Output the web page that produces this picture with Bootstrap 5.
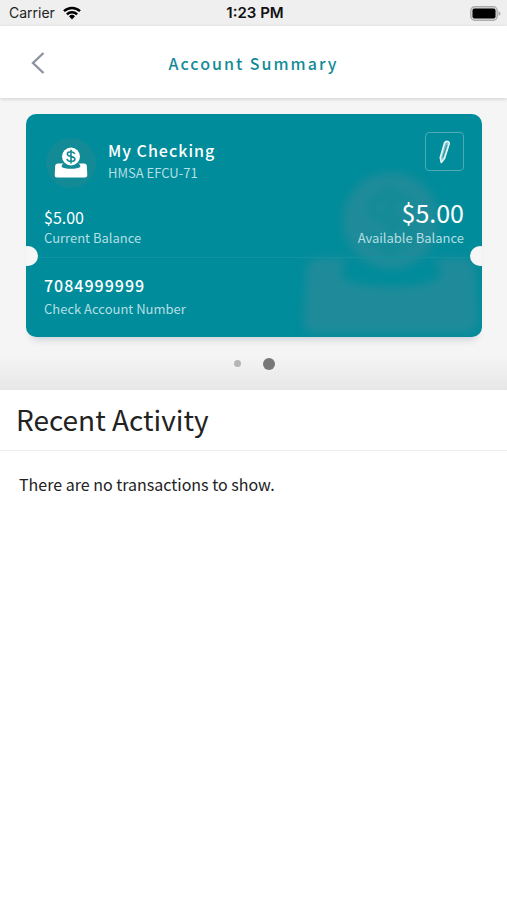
<!DOCTYPE html>
<html lang="en">
<head>
<meta charset="utf-8">
<meta name="viewport" content="width=device-width, initial-scale=1">
<title>Account Summary</title>
<link href="https://cdn.jsdelivr.net/npm/bootstrap@5.3.0/dist/css/bootstrap.min.css" rel="stylesheet">
<style>
  body { font-family: "Noto Sans CJK SC", "Noto Sans", sans-serif; color: #222; background: #fff; }
  .status-bar { font-family: Inter, "Liberation Sans", sans-serif; font-size: 14px; line-height: 26px; padding: 0 6px 0 9px; background: #efefef; color: #222; }
  .status-bar .clock { font-size: 15px; font-weight: 600; color: #111; }
  .title-bar { height: 72px; padding: 2px 24px 0; background: #fff; box-shadow: 0 1px 4px rgba(0,0,0,.16); z-index: 1; }
  .title-bar h1 { font-size: 16px; line-height: 24px; font-weight: 500; letter-spacing: 2px; color: #138b97; }
  .back-btn, .back-space { width: 28px; height: 40px; }
  .summary { padding: 16px 25px 0 26px; background: linear-gradient(#f5f5f5 0, #f5f5f5 256px, #e7e7e7 100%); }
  .account { background: #008c9b; color: #fff; border-radius: 10px; }
  .account-shadow { border-radius: 10px; box-shadow: 0 8px 8px -6px rgba(0,40,80,.2); }
  .account-top { padding: 18px 18px 8px; }
  .account-bottom { padding: 15px 18px 17px; }
  .emblem { width: 50px; height: 50px; border-radius: 50%; background: #128b97; color: #fff; margin: 6px 0 0 2px; }
  .heading { padding: 6px 0 0 12px; }
  .balances { padding-top: 9px; }
  .watermark { right: 0; bottom: -4px; color: #1f8b9a; filter: blur(5px); }
  .name { font-size: 16px; line-height: 24px; font-weight: 500; letter-spacing: 1px; }
  .caption { font-size: 13px; line-height: 22px; color: #b4dfe3; }
  .amount { font-size: 16px; line-height: 20px; }
  .amount-lg { font-size: 25px; line-height: 30px; }
  .number { font-size: 16px; line-height: 25px; font-weight: 500; letter-spacing: 1px; }
  .edit-btn { width: 39px; height: 39px; border: 1px solid #4eabb5; border-radius: 4px; }
  .tear { height: 1px; background: #1093a1; }
  .notch { width: 20px; height: 20px; top: -11px; border-radius: 50%; background: #f6f6f6; }
  .notch-left { left: -8px; }
  .notch-right { right: -8px; }
  .pager { height: 53px; gap: 22px; }
  .pager-dot { width: 7px; height: 7px; border-radius: 50%; background: #b5b5b5; }
  .pager-dot.active { width: 12px; height: 12px; background: #777; }
  .activity h2 { font-size: 28px; line-height: 40px; font-weight: 400; padding: 9px 16px 11px; border-bottom: 1px solid #eee; }
  .activity p { font-size: 16px; line-height: 24px; padding: 21px 19px; }
</style>
<script src="https://cdn.jsdelivr.net/npm/bootstrap@5.3.0/dist/js/bootstrap.bundle.min.js"></script>
</head>
<body>
<svg width="0" height="0" class="position-absolute" aria-hidden="true">
  <symbol id="coin-slot" viewBox="0 0 34 32">
    <path fill="currentColor" d="M4 16.500h5.500C7.500 18 7 19.500 8.500 20.500c4 1.800 13 1.800 17 0 1.500-1 1-2.500-1-4H30q2.500 0 2.800 2l.5 9.500q0 2.500-2.300 2.500H3Q.7 30.500.7 28l.5-9.500q.3-2 2.800-2z"/>
    <circle cx="17" cy="9.500" r="9" fill="currentColor"/>
    <path fill="none" stroke="#128b97" stroke-width="1.600" d="M20.800 6.800C20 5.200 18.700 4.700 17 4.700c-2.200 0-3.700.8-3.700 2.300 0 3.400 7.600 1.500 7.600 5 0 1.600-1.600 2.500-3.900 2.500-2 0-3.500-.8-4.100-2.500M17 2.800v13.600"/>
  </symbol>
</svg>

<div class="status-bar d-flex align-items-center">
  <div class="col d-flex align-items-center">
    <span class="pe-2">Carrier</span>
    <svg width="18" height="14" viewBox="0 0 18 14" fill="none" stroke="#000" stroke-width="2.500" aria-label="Wi-Fi"><path d="M1 5.200a11.500 11.500 0 0 1 16 0M3.900 8.300a7.300 7.300 0 0 1 10.200 0"/><path fill="#000" stroke="none" d="M6 10.300a4.300 4.300 0 0 1 6 0L9 13.500z"/></svg>
  </div>
  <span class="clock">1:23 PM</span>
  <div class="col d-flex justify-content-end">
    <svg width="31" height="15" viewBox="0 0 31 15" aria-label="Battery full"><rect x=".7" y=".7" width="26.600" height="13.600" rx="4" fill="#d5d5d5" stroke="#aaa" stroke-width="1.200"/><rect x="2.500" y="2.500" width="23" height="10" rx="2" fill="#000"/><path d="M28.500 5q2 1 2 2.500t-2 2.500z" fill="#aaa"/></svg>
  </div>
</div>

<header class="title-bar position-relative d-flex align-items-center justify-content-between">
  <button type="button" class="back-btn btn p-0 border-0 d-flex align-items-center justify-content-center" aria-label="Back">
    <svg width="14" height="24" viewBox="0 0 14 24" fill="none" stroke="#8d949f" stroke-width="2.400"><path d="M12.500 2 2 12l10.500 10"/></svg>
  </button>
  <h1 class="mb-0">Account Summary</h1>
  <span class="back-space"></span>
</header>

<main>
  <section class="summary">
    <div class="account-shadow">
    <article class="account position-relative overflow-hidden">
      <svg class="watermark position-absolute" width="182" height="171" aria-hidden="true"><use href="#coin-slot"/></svg>
      <div class="account-top position-relative">
        <div class="d-flex align-items-start">
          <div class="emblem d-flex align-items-center justify-content-center flex-shrink-0">
            <svg width="34" height="32" aria-hidden="true"><use href="#coin-slot"/></svg>
          </div>
          <div class="heading flex-grow-1">
            <div class="name">My Checking</div>
            <div class="caption">HMSA EFCU-71</div>
          </div>
          <button type="button" class="edit-btn btn p-0 d-flex align-items-center justify-content-center" aria-label="Edit account">
            <svg width="14" height="24" viewBox="0 0 14 24" fill="#7cc3ca" stroke="#e2f6f7" stroke-width="1.600" stroke-linejoin="round"><path d="M6.500 3Q8 .5 10.300 1.700q1.200.8.8 2.300L6.500 18.500l-3.200 4L2.300 17.500z"/><path fill="none" stroke="#22929e" stroke-width="1" d="M8.800 5 5 17"/></svg>
          </button>
        </div>
        <div class="balances d-flex justify-content-between align-items-end">
          <div>
            <div class="amount">$5.00</div>
            <div class="caption">Current Balance</div>
          </div>
          <div class="text-end">
            <div class="amount-lg">$5.00</div>
            <div class="caption">Available Balance</div>
          </div>
        </div>
      </div>
      <div class="tear position-relative">
        <span class="notch notch-left position-absolute"></span>
        <span class="notch notch-right position-absolute"></span>
      </div>
      <div class="account-bottom position-relative">
        <div class="number">7084999999</div>
        <div class="caption">Check Account Number</div>
      </div>
    </article>
    </div>
    <div class="pager d-flex align-items-center justify-content-center">
      <button type="button" class="pager-dot border-0 p-0" aria-label="Account 1"></button>
      <button type="button" class="pager-dot active border-0 p-0" aria-label="Account 2" aria-current="true"></button>
    </div>
  </section>

  <section class="activity">
    <h2 class="mb-0">Recent Activity</h2>
    <p class="mb-0">There are no transactions to show.</p>
  </section>
</main>
</body>
</html>
